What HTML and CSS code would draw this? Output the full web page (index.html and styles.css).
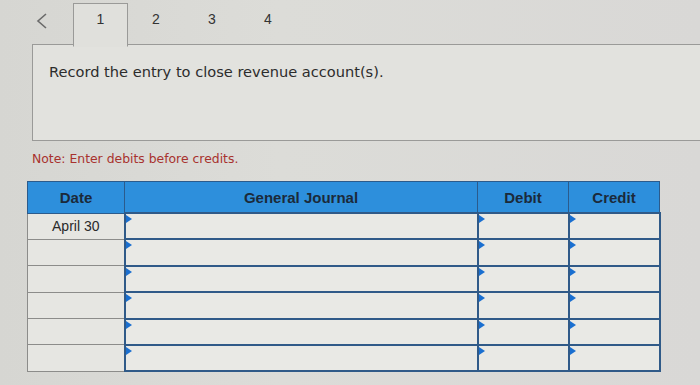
FILE: index.html
```html
<!DOCTYPE html>
<html>
<head>
    <title>Journal Entry</title>
    <link rel="stylesheet" href="styles.css">
</head>
<body>
    <div class="tabs">
        <span class="prev">
            <svg width="12" height="16" viewBox="0 0 12 16"><path d="M10 1 L2 8 L10 15" fill="none" stroke="#6a6a6a" stroke-width="1.6"/></svg>
        </span>
        <span class="tab active">1</span>
        <span class="tab">2</span>
        <span class="tab">3</span>
        <span class="tab">4</span>
        <span class="tab-rest"></span>
    </div>
    <div class="question">
        <p>Record the entry to close revenue account(s).</p>
    </div>

    <p class="note">Note: Enter debits before credits.</p>

    <table class="journal">
        <thead>
            <tr>
                <th class="col-date">Date</th>
                <th class="col-desc">General Journal</th>
                <th class="col-num">Debit</th>
                <th class="col-num">Credit</th>
            </tr>
        </thead>
        <tbody>
            <tr>
                <td class="date">April 30</td>
                <td class="entry"></td>
                <td class="entry"></td>
                <td class="entry"></td>
            </tr>
            <tr>
                <td class="date"></td>
                <td class="entry"></td>
                <td class="entry"></td>
                <td class="entry"></td>
            </tr>
            <tr>
                <td class="date"></td>
                <td class="entry"></td>
                <td class="entry"></td>
                <td class="entry"></td>
            </tr>
            <tr>
                <td class="date"></td>
                <td class="entry"></td>
                <td class="entry"></td>
                <td class="entry"></td>
            </tr>
            <tr>
                <td class="date"></td>
                <td class="entry"></td>
                <td class="entry"></td>
                <td class="entry"></td>
            </tr>
            <tr>
                <td class="date"></td>
                <td class="entry"></td>
                <td class="entry"></td>
                <td class="entry"></td>
            </tr>
        </tbody>
    </table>
</body>
</html>
```

FILE: styles.css
```css
body {
    margin: 0;
    padding-top: 3px;
    background: linear-gradient(90deg, #d6d6d2 0%, #dcdcd8 40%, #d9d8d6 100%);
    font-family: "DejaVu Sans", Verdana, sans-serif;
    color: #2a2a2a;
    height: 385px;
    overflow: hidden;
}

.tabs {
    display: flex;
    align-items: stretch;
    height: 42px;
    padding-left: 32px;
}

.prev {
    width: 41px;
    padding: 10px 0 0 4px;
    box-sizing: border-box;
    border-bottom: 1px solid #9a9a98;
}

.tab {
    width: 56px;
    text-align: center;
    font-family: "Liberation Sans", Arial, sans-serif;
    font-size: 14px;
    color: #333;
    line-height: 32px;
    border-bottom: 1px solid #9a9a98;
}

.tab.active {
    width: 55px;
    background: #e0e0dc;
    border: 1px solid #9a9a98;
    border-bottom: 1px solid #e0e0dc;
    line-height: 30px;
    position: relative;
    z-index: 1;
    height: 44px;
    box-sizing: border-box;
}

.tab-rest {
    flex: 1;
    border-bottom: 1px solid #9a9a98;
}

.question {
    margin-left: 32px;
    margin-top: -1px;
    height: 97px;
    background: #e2e2de;
    border-left: 1px solid #9a9a98;
    border-bottom: 1px solid #9a9a98;
    box-sizing: border-box;
    padding: 19px 16px;
}

.question p {
    margin: 0;
    font-size: 14.6px;
    color: #2c2c2c;
}

.note {
    margin: 10px 0 0 32px;
    font-size: 12.4px;
    color: #a8322e;
    line-height: 15px;
}

.journal {
    margin: 15px 0 0 27px;
    border-collapse: collapse;
    table-layout: fixed;
    width: 630px;
    font-family: "Liberation Sans", Arial, sans-serif;
}

.journal th {
    height: 30px;
    background: #2d8fdc;
    color: #1b2a3a;
    font-size: 15px;
    font-weight: bold;
    border: 1px solid #2b5b8c;
    padding: 0;
}

.col-date { width: 96px; }
.col-desc { width: 352px; }
.col-num { width: 90px; }

.journal td {
    height: 24.4px;
    padding: 0;
}

.journal .date {
    background: #e6e6e2;
    border: 1px solid #8c8c8a;
    text-align: center;
    font-size: 14px;
    color: #2a2a2a;
}

.journal .entry {
    background: #e9e9e5;
    border: 2px solid #305a88;
    position: relative;
}

.journal .entry::before {
    content: "";
    position: absolute;
    left: 0;
    top: 1px;
    border-left: 6px solid #1a6fd0;
    border-top: 4px solid transparent;
    border-bottom: 4px solid transparent;
}
```
